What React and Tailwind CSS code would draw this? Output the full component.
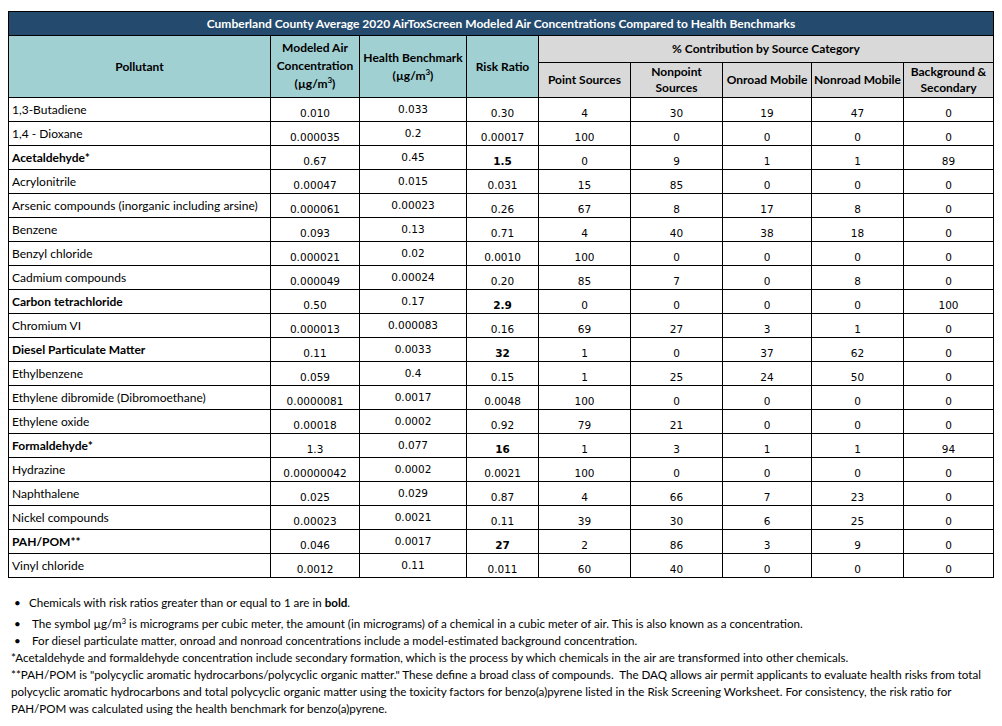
import React from "react";

const rows = [
  ["1,3-Butadiene", "0.010", "0.033", "0.30", "4", "30", "19", "47", "0"],
  ["1,4 - Dioxane", "0.000035", "0.2", "0.00017", "100", "0", "0", "0", "0"],
  ["Acetaldehyde*", "0.67", "0.45", "1.5", "0", "9", "1", "1", "89", true],
  ["Acrylonitrile", "0.00047", "0.015", "0.031", "15", "85", "0", "0", "0"],
  ["Arsenic compounds (inorganic including arsine)", "0.000061", "0.00023", "0.26", "67", "8", "17", "8", "0"],
  ["Benzene", "0.093", "0.13", "0.71", "4", "40", "38", "18", "0"],
  ["Benzyl chloride", "0.000021", "0.02", "0.0010", "100", "0", "0", "0", "0"],
  ["Cadmium compounds", "0.000049", "0.00024", "0.20", "85", "7", "0", "8", "0"],
  ["Carbon tetrachloride", "0.50", "0.17", "2.9", "0", "0", "0", "0", "100", true],
  ["Chromium VI", "0.000013", "0.000083", "0.16", "69", "27", "3", "1", "0"],
  ["Diesel Particulate Matter", "0.11", "0.0033", "32", "1", "0", "37", "62", "0", true],
  ["Ethylbenzene", "0.059", "0.4", "0.15", "1", "25", "24", "50", "0"],
  ["Ethylene dibromide (Dibromoethane)", "0.0000081", "0.0017", "0.0048", "100", "0", "0", "0", "0"],
  ["Ethylene oxide", "0.00018", "0.0002", "0.92", "79", "21", "0", "0", "0"],
  ["Formaldehyde*", "1.3", "0.077", "16", "1", "3", "1", "1", "94", true],
  ["Hydrazine", "0.00000042", "0.0002", "0.0021", "100", "0", "0", "0", "0"],
  ["Naphthalene", "0.025", "0.029", "0.87", "4", "66", "7", "23", "0"],
  ["Nickel compounds", "0.00023", "0.0021", "0.11", "39", "30", "6", "25", "0"],
  ["PAH/POM**", "0.046", "0.0017", "27", "2", "86", "3", "9", "0", true],
  ["Vinyl chloride", "0.0012", "0.11", "0.011", "60", "40", "0", "0", "0"],
];

const sans = "font-['Lato','Open_Sans',sans-serif]";
const num = "font-['DejaVu_Sans',Verdana,sans-serif] text-[10.5px] leading-[13px] text-black text-center";

const M3 = () => (
  <span>
    (µg/m<sup className="text-[8px] -top-[5px]">3</sup>)
  </span>
);

const App = () => {
  return (
    <div className={`bg-white w-[1002px] h-[726px] pt-[11px] pl-[8px] ${sans} text-black`}>
      <table className="table-fixed border-collapse w-[985px]">
        <colgroup>
          <col className="w-[262px]" />
          <col className="w-[89px]" />
          <col className="w-[107px]" />
          <col className="w-[72px]" />
          <col className="w-[92px]" />
          <col className="w-[92px]" />
          <col className="w-[89px]" />
          <col className="w-[92px]" />
          <col className="w-[90px]" />
        </colgroup>
        <thead>
          <tr className="h-[24px]">
            <th colSpan={9} className="bg-[#244b6e] border border-black text-white font-bold text-[12px] text-center p-0">
              Cumberland County Average 2020 AirToxScreen Modeled Air Concentrations Compared to Health Benchmarks
            </th>
          </tr>
          <tr className="h-[27px] text-[12px] font-bold leading-[18px]">
            <th rowSpan={2} className="bg-[#a0d0d2] border border-black p-0">Pollutant</th>
            <th rowSpan={2} className="bg-[#a0d0d2] border border-black p-0 pb-[2px]">
              Modeled Air
              <br />
              Concentration
              <br />
              <M3 />
            </th>
            <th rowSpan={2} className="bg-[#a0d0d2] border border-black p-0">
              Health Benchmark
              <br />
              <M3 />
            </th>
            <th rowSpan={2} className="bg-[#a0d0d2] border border-black p-0">Risk Ratio</th>
            <th colSpan={5} className="bg-[#d9d9d9] border border-black p-0">% Contribution by Source Category</th>
          </tr>
          <tr className="h-[35px] text-[12px] font-bold leading-[16px]">
            <th className="bg-[#d9d9d9] border border-black p-0">Point Sources</th>
            <th className="bg-[#d9d9d9] border border-black p-0">
              Nonpoint
              <br />
              Sources
            </th>
            <th className="bg-[#d9d9d9] border border-black p-0">Onroad Mobile</th>
            <th className="bg-[#d9d9d9] border border-black p-0">Nonroad Mobile</th>
            <th className="bg-[#d9d9d9] border border-black p-0">
              Background &amp;
              <br />
              Secondary
            </th>
          </tr>
        </thead>
        <tbody>
          {rows.map((r) => (
            <tr key={r[0]} className="h-[24px]">
              <td className={`border border-black px-[3px] py-0 align-middle text-[12px] leading-[16px] whitespace-nowrap ${r[9] ? "font-bold" : ""}`}>
                {r[0]}
              </td>
              <td className={`border border-black p-0 pb-[1px] align-bottom ${num}`}>{r[1]}</td>
              <td className={`border border-black p-0 align-middle ${num}`}>{r[2]}</td>
              <td className={`border border-black p-0 pb-[1px] align-bottom ${num} ${r[9] ? "font-bold" : ""}`}>{r[3]}</td>
              {r.slice(4, 9).map((v, i) => (
                <td key={i} className={`border border-black p-0 pb-[1px] align-bottom ${num}`}>
                  {v}
                </td>
              ))}
            </tr>
          ))}
        </tbody>
      </table>

      <div className="mt-[16px] text-[11.6px] leading-[17px] whitespace-nowrap pl-[3px]">
        <div className="flex">
          <span className="w-[18px] pl-[3px]">•</span>
          <span>
            Chemicals with risk ratios greater than or equal to 1 are in <b>bold</b>.
          </span>
        </div>
        <div className="flex mt-[4px]">
          <span className="w-[21px] pl-[3px]">•</span>
          <span>
            The symbol µg/m<sup className="text-[8px]">3</sup> is micrograms per cubic meter, the amount (in micrograms) of a chemical in a cubic meter of air. This is also known as a concentration.
          </span>
        </div>
        <div className="flex">
          <span className="w-[21px] pl-[3px]">•</span>
          <span>For diesel particulate matter, onroad and nonroad concentrations include a model-estimated background concentration.</span>
        </div>
        <div>*Acetaldehyde and formaldehyde concentration include secondary formation, which is the process by which chemicals in the air are transformed into other chemicals.</div>
        <div>
          **PAH/POM is "polycyclic aromatic hydrocarbons/polycyclic organic matter." These define a broad class of compounds.&nbsp; The DAQ allows air permit applicants to evaluate health risks from total
        </div>
        <div>
          polycyclic aromatic hydrocarbons and total polycyclic organic matter using the toxicity factors for benzo(a)pyrene listed in the Risk Screening Worksheet. For consistency, the risk ratio for
        </div>
        <div>PAH/POM was calculated using the health benchmark for benzo(a)pyrene.</div>
      </div>
    </div>
  );
};

export default App;
